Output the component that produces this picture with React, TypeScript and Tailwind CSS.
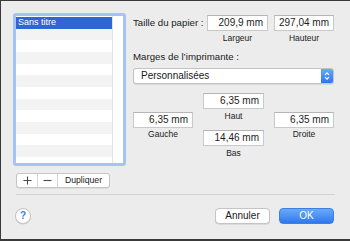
import React from 'react';

const rows = ['Sans titre', '', '', '', '', '', '', '', '', '', '', '', ''];

const Field = ({ value, width }: { value: string; width: string }) => (
  <div
    className={`${width} h-[16px] bg-white border border-[#c9c9c9] border-t-[#b5b5b5] flex items-center justify-end pr-[4px] text-[10px] text-[#1d1d1d] leading-none`}
  >
    {value}
  </div>
);

const Caption = ({ children }: { children: React.ReactNode }) => (
  <div className="h-[10px] text-[8.5px] leading-[10px] text-[#222] text-center">{children}</div>
);

const App: React.FC = () => {
  return (
    <div className="w-[350px] h-[241px] bg-[#ececec] border-t border-l border-b-2 border-[#3a3a3a] pl-[12px] pt-[12px] pr-[16px] flex flex-col font-['Liberation_Sans',Arial,sans-serif] overflow-hidden">
      {/* Top area */}
      <div className="flex">
        {/* Left column: preset list */}
        <div className="flex flex-col w-[113px]">
          <div className="h-[153px] border-[3px] border-[#a6c4f2] rounded-[3px] bg-white flex overflow-hidden">
            <div className="w-[97px] pt-[1px] flex flex-col overflow-hidden border-r border-[#e3e3e3]">
              {rows.map((label, i) => (
                <div
                  key={i}
                  className={`h-[11.67px] shrink-0 pl-[2px] text-[9px] leading-[11.67px] ${
                    i === 0 ? 'bg-[#3065d6] text-white' : i % 2 === 1 ? 'bg-[#f3f3f3]' : 'bg-white'
                  }`}
                >
                  {label}
                </div>
              ))}
            </div>
            <div className="flex-1 bg-white" />
          </div>

          {/* +/-/Dupliquer */}
          <div className="ml-[3px] mt-[7px] w-[94px] h-[15px] flex bg-white border border-[#c6c6c6] rounded-[3px] shadow-[0_0.5px_0.5px_rgba(0,0,0,0.12)] text-[#333]">
            <div className="w-[21px] border-r border-[#d4d4d4] flex items-center justify-center">
              <svg width="9" height="9" viewBox="0 0 9 9">
                <path d="M4.5 0.5v8M0.5 4.5h8" stroke="#4a4a4a" strokeWidth="1.1" />
              </svg>
            </div>
            <div className="w-[20px] border-r border-[#d4d4d4] flex items-center justify-center">
              <svg width="9" height="9" viewBox="0 0 9 9">
                <path d="M0.5 4.5h8" stroke="#4a4a4a" strokeWidth="1.1" />
              </svg>
            </div>
            <div className="flex-1 flex items-center justify-center text-[8.7px] leading-none text-[#222]">
              Dupliquer
            </div>
          </div>
        </div>

        {/* Right panel */}
        <div className="ml-[7px] mt-[2px] w-[201px] flex flex-col text-[#1a1a1a]">
          <div className="flex items-center">
            <div className="w-[74px] text-[9.7px] leading-none">Taille du papier :</div>
            <Field value="209,9 mm" width="w-[61px]" />
            <div className="ml-[6px]">
              <Field value="297,04 mm" width="w-[60px]" />
            </div>
          </div>
          <div className="flex mt-[2px]">
            <div className="w-[74px]" />
            <div className="w-[61px]">
              <Caption>Largeur</Caption>
            </div>
            <div className="ml-[6px] w-[60px]">
              <Caption>Hauteur</Caption>
            </div>
          </div>

          <div className="mt-[8px] text-[9.7px] leading-[12px]">Marges de l’imprimante :</div>

          {/* Popup */}
          <div className="mt-[5px] h-[16px] flex bg-white border border-[#c3c3c3] rounded-[3px] shadow-[0_0.5px_0.5px_rgba(0,0,0,0.15)] overflow-hidden">
            <div className="flex-1 pl-[7px] flex items-center text-[10px] leading-none text-[#1a1a1a]">
              Personnalisées
            </div>
            <div className="w-[12px] bg-linear-to-b from-[#6aa9f8] to-[#2c74ee] flex items-center justify-center">
              <svg width="6" height="10" viewBox="0 0 6 10">
                <path d="M1 3.8L3 1.8L5 3.8M1 6.2L3 8.2L5 6.2" stroke="white" strokeWidth="1.1" fill="none" />
              </svg>
            </div>
          </div>

          {/* Margins */}
          <div className="mt-[9px] flex">
            <div className="w-[60px] mt-[19px] flex flex-col">
              <Field value="6,35 mm" width="w-[60px]" />
              <div className="mt-[1px]">
                <Caption>Gauche</Caption>
              </div>
            </div>
            <div className="ml-[10px] w-[61px] flex flex-col">
              <Field value="6,35 mm" width="w-[61px]" />
              <div className="mt-[2px]">
                <Caption>Haut</Caption>
              </div>
              <div className="mt-[9px]">
                <Field value="14,46 mm" width="w-[61px]" />
              </div>
              <div className="mt-[2px]">
                <Caption>Bas</Caption>
              </div>
            </div>
            <div className="ml-[10px] w-[60px] mt-[19px] flex flex-col">
              <Field value="6,35 mm" width="w-[60px]" />
              <div className="mt-[1px]">
                <Caption>Droite</Caption>
              </div>
            </div>
          </div>
        </div>
      </div>

      {/* Separator */}
      <div className="ml-[3px] mr-[-1px] mt-[6px] h-px bg-[#d3d3d3]" />

      {/* Bottom bar */}
      <div className="mt-[13px] flex items-center">
        <div className="ml-[2px] w-[16px] h-[16px] rounded-full bg-white border border-[#c4c4c4] shadow-[0_0.5px_0.5px_rgba(0,0,0,0.12)] flex items-center justify-center text-[10px] font-bold leading-none text-[#3b7de8]">
          ?
        </div>
        <div className="flex-1" />
        <div className="w-[55px] h-[16px] bg-white border border-[#c4c4c4] rounded-[4px] shadow-[0_0.5px_0.5px_rgba(0,0,0,0.15)] flex items-center justify-center text-[10px] leading-none text-[#1a1a1a]">
          Annuler
        </div>
        <div className="ml-[9px] w-[55px] h-[16px] rounded-[4px] bg-linear-to-b from-[#6aa9f8] to-[#2f78ee] border border-[#3b7fe8] flex items-center justify-center text-[10px] leading-none text-white">
          OK
        </div>
      </div>
    </div>
  );
};

export default App;
